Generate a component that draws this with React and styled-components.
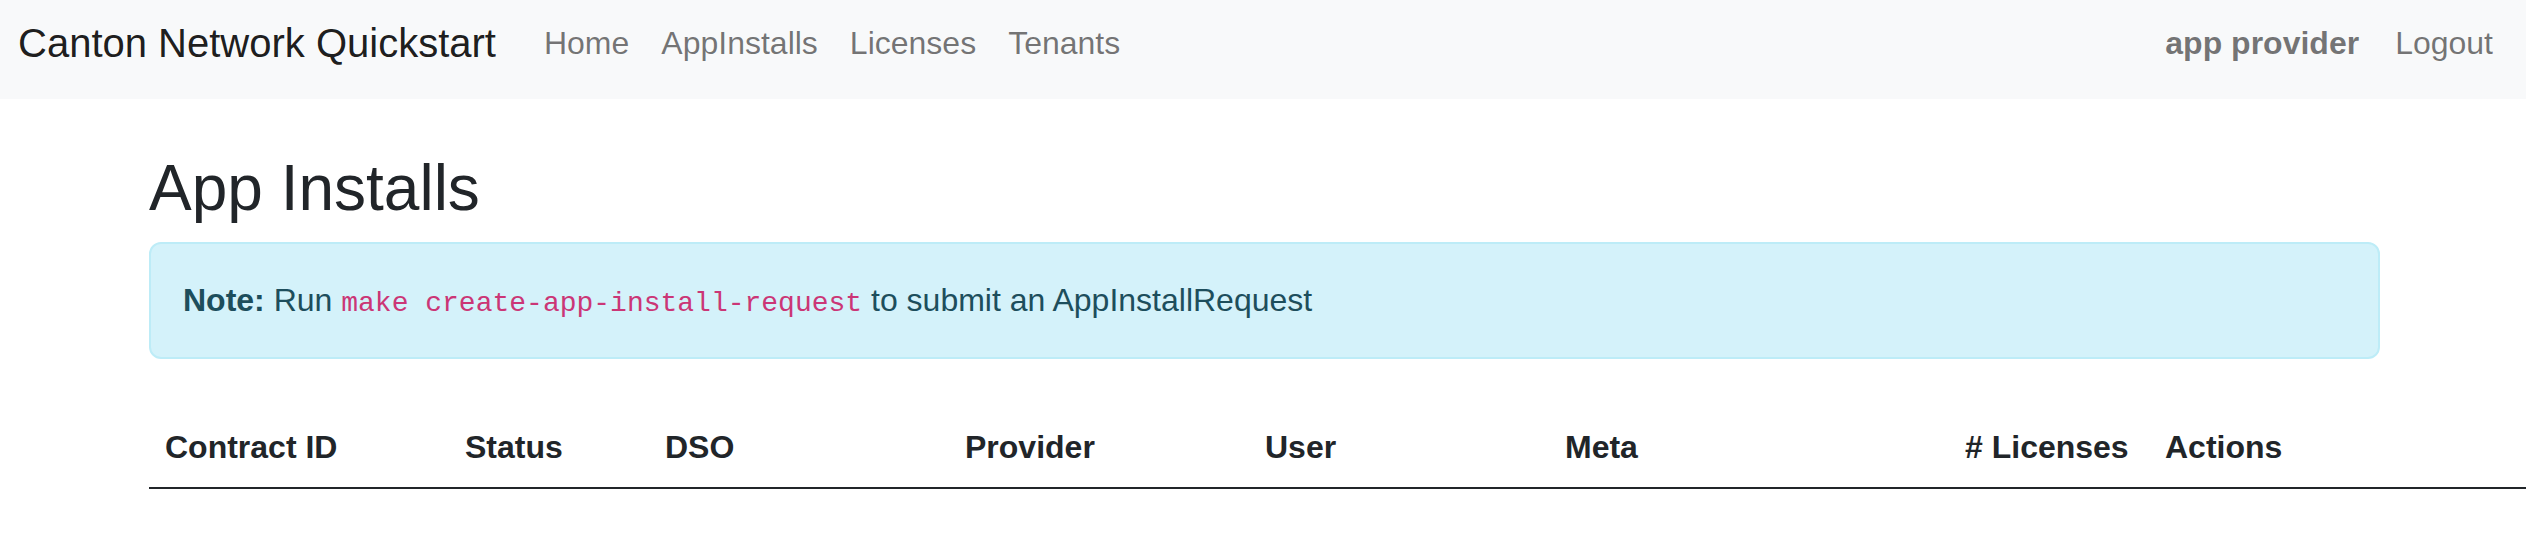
import React from "react";
import styled, { createGlobalStyle } from "styled-components";

const GlobalStyle = createGlobalStyle`
  html, body {
    margin: 0;
    padding: 0;
    overflow-x: hidden;
    background: #fff;
  }
  body {
    font-family: "Liberation Sans", Arial, sans-serif;
    font-size: 32px;
    line-height: 1.5;
    color: #212529;
  }
  * { box-sizing: border-box; }
`;

const Navbar = styled.nav`
  height: 99px;
  background: #f8f9fa;
  padding: 13px 17px 0 18px;
  display: flex;
  align-items: flex-start;
  justify-content: space-between;
`;

const NavRow = styled.div`
  height: 60px;
  display: flex;
  align-items: center;
`;

const Brand = styled.a`
  font-size: 40px;
  line-height: 60px;
  color: rgba(0, 0, 0, 0.9);
  text-decoration: none;
  margin-right: 32px;
`;

const NavLink = styled.a`
  font-size: 32px;
  line-height: 48px;
  padding: 0 16px;
  color: rgba(0, 0, 0, 0.55);
  text-decoration: none;
  cursor: pointer;
`;

const UserName = styled.span`
  font-weight: 700;
  line-height: 48px;
  color: rgba(0, 0, 0, 0.55);
  margin-right: 20px;
`;

const Container = styled.main`
  width: 2231px;
  margin-left: calc(50% - 1114px);
  padding-top: 51px;
`;

const Title = styled.h2`
  font-size: 64px;
  font-weight: 500;
  line-height: 1.2;
  margin: 0 0 15px;
`;

const Alert = styled.div`
  padding: 32px;
  border: 2px solid #bdecf7;
  border-radius: 12px;
  background: #d4f2fa;
  color: #1d4e5c;
`;

const Code = styled.code`
  font-family: "Liberation Mono", "Courier New", monospace;
  font-size: 28px;
  color: #cb3676;
`;

const Table = styled.table`
  margin-top: 48px;
  border-collapse: collapse;
  table-layout: fixed;
  width: 2400px;
`;

const Th = styled.th`
  width: ${(p) => p.$w}px;
  padding: 16px;
  text-align: left;
  font-weight: 700;
  line-height: 48px;
  border-bottom: 2px solid #212529;
  white-space: nowrap;
`;

const columns = [
  ["Contract ID", 300],
  ["Status", 200],
  ["DSO", 300],
  ["Provider", 300],
  ["User", 300],
  ["Meta", 400],
  ["# Licenses", 200],
  ["Actions", 400],
];

const App = () => {
  return (
    <>
      <GlobalStyle />
      <Navbar>
        <NavRow>
          <Brand>Canton Network Quickstart</Brand>
          <NavLink>Home</NavLink>
          <NavLink>AppInstalls</NavLink>
          <NavLink>Licenses</NavLink>
          <NavLink>Tenants</NavLink>
        </NavRow>
        <NavRow>
          <UserName>app provider</UserName>
          <NavLink>Logout</NavLink>
        </NavRow>
      </Navbar>

      <Container>
        <Title>App Installs</Title>
        <Alert>
          <strong>Note:</strong> Run <Code>make create-app-install-request</Code> to submit an AppInstallRequest
        </Alert>

        <Table>
          <thead>
            <tr>
              {columns.map(([label, w]) => (
                <Th key={label} $w={w}>
                  {label}
                </Th>
              ))}
            </tr>
          </thead>
          <tbody></tbody>
        </Table>
      </Container>
    </>
  );
};

export default App;
